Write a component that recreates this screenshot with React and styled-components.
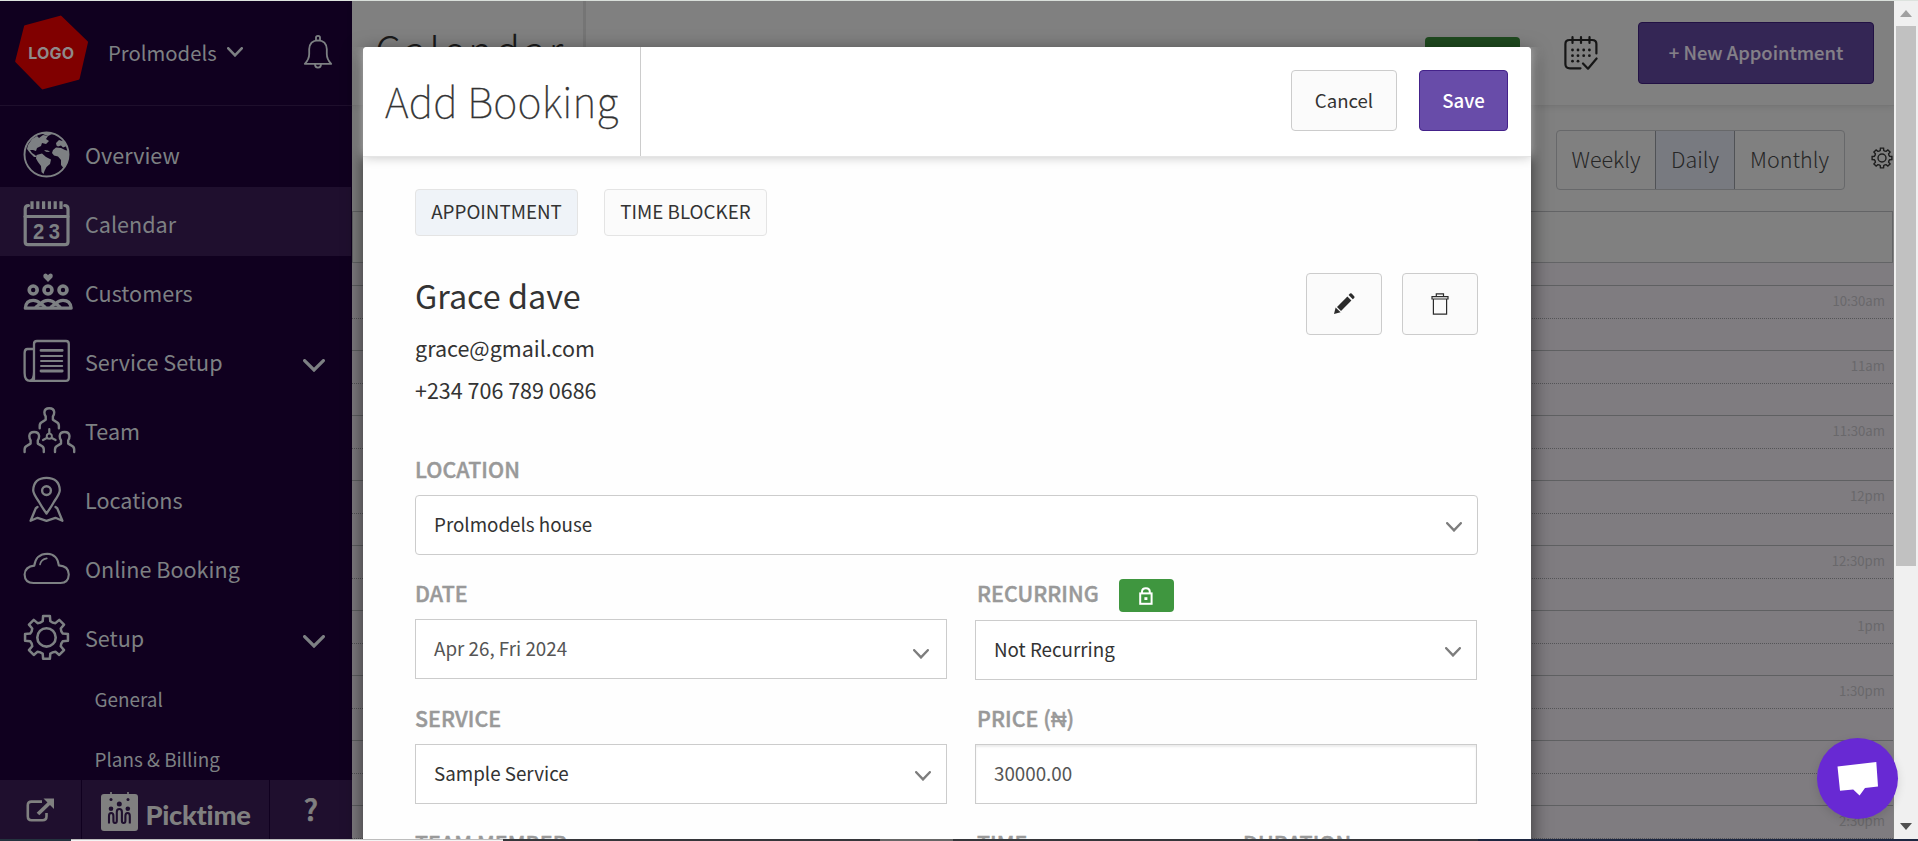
import React from 'react';
import styled, { createGlobalStyle, css } from 'styled-components';

const sans = '"Source Sans Pro", "Noto Sans CJK SC", "Open Sans", sans-serif';

const GlobalStyle = createGlobalStyle`
  * { box-sizing: border-box; }
  body { margin: 0; overflow: hidden; background: #808080; font-family: ${sans}; color: #333; }
`;

const Screen = styled.div`
  position: relative;
  width: 1918px;
  height: 841px;
  display: flex;
  flex-direction: column;
  overflow: hidden;
  white-space: nowrap;
`;
const TopEdge = styled.div`height: 1px; flex: none; background: #dde3de;`;
const Main = styled.div`flex: 1; min-height: 0; display: flex;`;
const BottomEdge = styled.div`
  height: 2px; flex: none; position: relative; z-index: 5; display: flex;
`;
const EdgePart = styled.div`
  flex: ${p => (p.$w ? `0 0 ${p.$w}px` : 1)};
  background: ${p => p.$c};
`;

/* ---------- sidebar ---------- */
const Sidebar = styled.aside`
  width: 352px; flex: none; background: #10001f; color: #7d8083;
  display: flex; flex-direction: column;
`;
const Brand = styled.div`
  height: 105px; flex: none; display: flex; align-items: center; border-bottom: 1px solid #1e0f2c;
  padding: 0 19px 2px 15px;
`;
const BrandName = styled.div`
  margin-left: 19px; font-size: 20.3px; line-height: 30px; flex: 1; display: flex; align-items: center; gap: 10px;
`;
const Nav = styled.nav`flex: 1; min-height: 0; overflow: hidden; padding-top: 12px;`;
const NavItem = styled.div`
  height: 69px; width: 351px; display: flex; align-items: center; padding: 1px 26px 0 22px;
  background: ${p => (p.$active ? '#1f0f2e' : 'transparent')};
`;
const NavLabel = styled.span`
  flex: 1; margin-left: 7px; padding-top: 4px; font-size: 21.6px; line-height: 32px;
`;
const SubItem = styled.div`
  height: 60px; padding-left: 94.5px; line-height: 57px; font-size: 18.9px;
`;
const SideFooter = styled.div`height: 59px; flex: none; display: flex; background: #1f0f2e;`;
const FooterCell = styled.div`
  flex: ${p => (p.$w ? `0 0 ${p.$w}px` : 1)};
  display: flex; align-items: center; justify-content: center; color: #808080;
  padding-top: ${p => p.$pt || 0}px;
  ${p => p.$line && css`border-right: 1px solid #10001f;`}
`;
const Picktime = styled.span`
  margin-left: 8px; padding-top: 8px; font-family: Lato, sans-serif; font-weight: 900; font-size: 27.3px; line-height: 30px; letter-spacing: -0.3px;
`;
const Help = styled.span`font-size: 29px; font-weight: 500; -webkit-text-stroke: 0.7px #808080; line-height: 40px; padding-bottom: 4px;`;

/* ---------- calendar page ---------- */
const Page = styled.section`
  flex: 1; min-width: 0; background: #808080; display: flex; flex-direction: column;
`;
const PageHeader = styled.header`
  height: 105px; flex: none; display: flex; align-items: center; padding-right: 20px;
  border-bottom: 1px solid #767676; box-shadow: 0 2px 6px rgba(0,0,0,.08);
`;
const PageTitle = styled.div`
  width: 234px; height: 104px; padding-left: 23px; border-right: 3px solid #757575; color: #1a1a1a;
  font-size: 41px; font-weight: 300; line-height: 96px; letter-spacing: 3px;
`;
const Grow = styled.div`flex: 1;`;
const GreenTag = styled.div`width: 95px; height: 30px; border-radius: 4px; background: #1f4a1f; align-self: flex-start; margin-top: 36px;`;
const NewButton = styled.div`
  width: 236px; height: 62px; border: 1px solid #221144; border-radius: 4px; background: #342655; color: #848088;
  text-align: center; font-size: 18.4px; font-weight: 500; -webkit-text-stroke: 0.2px #848088; line-height: 58px;
`;
const IconSlot = styled.div`margin: 0 40px 0 44px; display: flex;`;
const ViewBar = styled.div`
  height: 105px; flex: none; display: flex; justify-content: flex-end; align-items: center; padding-top: 2px;
`;
const Segments = styled.div`display: flex; height: 60px; border: 1px solid #67686a; border-radius: 4px;`;
const Segment = styled.div`
  width: ${p => p.$w}px; text-align: center; line-height: 55px; font-size: 21.5px; font-weight: 300; color: #262626;
  background: ${p => (p.$active ? '#787a80' : 'transparent')};
  ${p => p.$active && css`border-left: 1px solid #505256; border-right: 1px solid #505256;`}
`;
const GearSlot = styled.div`margin: 0 1px 0 26px; display: flex; padding-bottom: 3px;`;
const DayHead = styled.div`height: 52px; flex: none; border: 1px solid #636466; margin-right: 1px;`;
const Gap = styled.div`height: 22px; flex: none; background: #7f7c80;`;
const Slot = styled.div`
  height: 65px; flex: none; background: #7f7c80; border-top: 1px solid #5f6062; margin-right: 1px;
`;
const SlotHalf = styled.div`
  height: 33px; border-bottom: 1px dotted #545457; text-align: right; padding-right: 8px; color: #69686b;
  font-size: 13.2px; font-weight: 400; line-height: 29px;
`;

/* ---------- window scrollbar ---------- */
const ScrollTrack = styled.div`
  width: 24px; flex: none; background: #f0f0f0; display: flex; flex-direction: column; align-items: center;
`;
const ScrollArrow = styled.div`height: 25px; width: 24px; display: flex; align-items: center; justify-content: center;`;
const Thumb = styled.div`width: 20px; height: 540px; background: #c1c1c1;`;

/* ---------- dialog ---------- */
const Dialog = styled.div`
  position: absolute; left: 363px; top: 47px; width: 1168px; height: 800px; background: #fefefe;
  border-radius: 4px 4px 0 0; box-shadow: 0 6px 20px rgba(0,0,0,.6);
`;
const DialogHeader = styled.div`
  height: 110px; display: flex; align-items: center; background: #fff; border-bottom: 1px solid #e5e5e5;
  border-radius: 4px 4px 0 0; box-shadow: 0 0 12px #c4c4c4; clip-path: inset(0 -12px -14px -12px);
  padding-right: 23px;
`;
const DialogTitle = styled.div`
  width: 278px; height: 109px; border-right: 1px solid #ccc; padding-left: 22px; font-size: 41px; font-weight: 100;
  line-height: 106px; color: #333; letter-spacing: 0.2px; -webkit-text-stroke: 0.3px #333;
`;
const Button = styled.div`
  width: ${p => p.$w}px; height: 61px; border-radius: 4px; text-align: center; line-height: 58px; font-size: 18.6px;
  margin-left: ${p => p.$ml || 0}px; margin-bottom: 3px;
  border: 1px solid ${p => (p.$primary ? '#44228a' : '#ccc')};
  background: ${p => (p.$primary ? '#684ca9' : '#fbfbfb')};
  color: ${p => (p.$primary ? '#fff' : '#333')};
  font-weight: ${p => (p.$primary ? 500 : 400)};
`;
const DialogBody = styled.div`padding: 32px 53px 0 52px;`;
const Tabs = styled.div`display: flex; gap: 26px;`;
const Tab = styled.div`
  width: 163px; height: 47px; border: 1px solid #e4e4e4; border-radius: 4px; text-align: center; line-height: 42px;
  font-size: 18.8px; background: ${p => (p.$active ? '#eff3f8' : '#fbfbfb')};
`;
const Contact = styled.div`display: flex; justify-content: space-between; margin-top: 37px;`;
const ContactName = styled.div`font-size: 32.3px; line-height: 44px; margin-bottom: 10px;`;
const ContactLine = styled.div`font-size: 21.5px; line-height: 42px;`;
const IconButtons = styled.div`display: flex; gap: 20px;`;
const IconButton = styled.div`
  width: 76px; height: 62px; border: 1px solid #ccc; border-radius: 4px; background: #fbfbfb;
  display: flex; align-items: center; justify-content: center;
`;
const Field = styled.div`margin-top: ${p => p.$mt}px;`;
const Label = styled.div`
  height: 30px; margin-bottom: ${p => p.$mb || 11}px; padding-left: ${p => p.$pl || 0}px; display: flex; align-items: center;
  font-size: 21.4px; line-height: 30px; font-weight: 500; -webkit-text-stroke: 0.45px #999; color: #999; letter-spacing: 0.05px;
`;
const Control = styled.div`
  height: 60px; border: 1px solid #ccc; border-radius: ${p => (p.$round ? 4 : 0)}px; background: #fff;
  display: flex; justify-content: space-between; align-items: center; padding: 0 ${p => p.$pr || 15}px 0 18px;
  font-size: 18.8px; line-height: 30px; color: ${p => (p.$muted ? '#555' : '#333')};
  ${p => p.$inset && css`box-shadow: inset 0 2px 2px rgba(0,0,0,.08);`}
`;
const ControlText = styled.span`padding-bottom: 2px;`;
const ChevronSlot = styled.span`display: flex; padding-top: ${p => p.$pt || 4}px;`;
const FormGrid = styled.div`display: grid; grid-template-columns: 532px 502px; column-gap: 28px;`;
const LockBadge = styled.span`
  width: 55px; height: 33px; border-radius: 4px; background: #3f963f; margin: 5px 0 0 20px;
  display: flex; align-items: center; justify-content: center;
`;
const TimeLabels = styled.div`display: grid; grid-template-columns: 266px 1fr;`;

const ChatButton = styled.div`
  position: absolute; left: 1817px; top: 738px; width: 81px; height: 81px; border-radius: 50%; background: #6829d3;
  box-shadow: 0 3px 10px rgba(0,0,0,.12); display: flex; align-items: center; justify-content: center;
`;

const Chevron = ({ w = 16, h = 10, color = '#7d7d7d', sw = 2.4 }) => (
  <svg width={w} height={h} viewBox={`0 0 ${w} ${h}`} fill="none" stroke={color} strokeWidth={sw} strokeLinecap="round">
    <path d={`M${sw / 2} ${sw / 2} L${w / 2} ${h - sw / 2 - 0.4} L${w - sw / 2} ${sw / 2}`} />
  </svg>
);

function gearPath(cx, cy, rOut, rIn) {
  const pt = (r, deg) => {
    const a = (deg * Math.PI) / 180;
    return `${(cx + r * Math.cos(a)).toFixed(2)} ${(cy + r * Math.sin(a)).toFixed(2)}`;
  };
  let d = '';
  for (let i = 0; i < 8; i++) {
    const c = i * 45;
    d += `${i ? 'L' : 'M'}${pt(rIn, c - 13)} L${pt(rOut, c - 9)} L${pt(rOut, c + 9)} L${pt(rIn, c + 13)} `;
    d += `Q${pt(rIn - rOut * 0.06, c + 22.5)} ${pt(rIn, c + 32)} `;
  }
  return d + 'Z';
}

/* Each navigation drawing uses a 56x50 box whose origin sits at (22, y). */
const NavIcon = ({ y, children }) => (
  <svg width="56" height="50" viewBox={`22 ${y} 56 50`} fill="none" stroke="#7d8083" strokeWidth="2.3" strokeLinejoin="round" strokeLinecap="round">
    {children}
  </svg>
);

const Globe = () => (
  <NavIcon y={128}>
    <circle cx="46.5" cy="154.5" r="22" strokeWidth="1.9" />
    <g fill="#7d8083" stroke="none">
      <path d="M28 145 L32 139 L37 136 L39 138 L43 135 L48 136 L46 139 L49 141 L46 144 L42 143 L41 146 L37 148 L36 151 L33 150 L30 150 L32 153 L35 155 L37 157 L34 157 L30 153 L27 149 Z" />
      <path d="M41 133 L49 132.6 L52 134 L48 136 L44 134.5 Z" />
      <path d="M36.5 155 L42 153.6 L46 157 L51 159.5 L50 164 L46.5 167 L44.5 171 L43.5 174 L41.5 172 L41 166 L38 162 L36 158.5 Z" />
      <path d="M53 150 L56 147.5 L61 148 L65 150 L68.5 151 L68.5 158 L66 165 L63.5 168 L61 165 L61 160 L58 156.5 L54 155.5 L52 153 Z" />
      <path d="M56 143 L59 140 L64 141.5 L67 146 L63 147.5 L61 145.5 L58 146.5 L56.5 145.5 Z" />
      <path d="M44 150 L48 150.5 L50 152 L46 151.7 Z" />
    </g>
  </NavIcon>
);
const CalendarIcon = () => (
  <NavIcon y={197}>
    <path d="M28.5 205.5 Q25.2 205.5 25.2 209 V242 Q25.2 244.6 28 244.6 H65 Q68 244.6 68 242 V209 Q68 205.5 64.7 205.5" strokeWidth="3.2" />
    <path d="M25 216.5 H68" strokeWidth="3" />
    <path d="M32 201.3 V209 M37.8 201.3 V209 M43.6 201.3 V209 M49.4 201.3 V209 M55.2 201.3 V209 M61 201.3 V209" strokeWidth="3.2" strokeLinecap="butt" />
    <text x="33" y="239" fill="#7d8083" stroke="none" fontFamily="Liberation Sans, sans-serif" fontWeight="700" fontSize="22" transform="translate(33 0) scale(.92 1) translate(-33 0)" letterSpacing="5">23</text>
  </NavIcon>
);
const CustomersIcon = () => (
  <NavIcon y={266}>
    <path d="M48 282 L43.6 277.5 Q42.6 274 45.4 273.6 Q47.3 273.6 48 275.3 Q48.8 273.6 50.8 273.6 Q53.6 274.2 52.4 277.5 Z" fill="#7d8083" stroke="none" />
    {[33.2, 48, 63].map(x => <circle key={x} cx={x} cy="290" r="4" strokeWidth="3.6" />)}
    <path d="M25.3 308.2 Q26 300.4 33.2 300.4 Q37.6 300.4 40.6 304 Q43.6 300.4 48 300.4 Q52.6 300.4 55.6 304 Q58.6 300.4 63 300.4 Q70.4 300.4 71.2 308.2 Z" strokeWidth="3.2" />
    <path d="M36 307 L40.6 303.5 L45 307 M51 307 L55.6 303.5 L60 307" strokeWidth="3" />
  </NavIcon>
);
const ServiceIcon = () => (
  <NavIcon y={335}>
    <path d="M34 379 V344 Q34 341 37 341 H66 Q68.8 341 68.8 344 V378 Q68.8 380.9 66 380.9 H30 Q24.6 380.9 24.6 373 V353 Q24.6 349 27.5 349 H34 M34 372 Q34 380.6 29.5 380.8" />
    <path d="M41 350.4 H62.2 M41 371 H62.2" strokeWidth="2.8" />
    <path d="M41 356 H62.2 M41 361 H62.2 M41 366 H62.2" strokeWidth="2" />
  </NavIcon>
);
const Person = ({ x, y }) => (
  <path
    transform={`translate(${x} ${y})`}
    d="M-9.6 20 V17.5 Q-9.6 14.6 -6.6 13.4 L-3.6 11.6 V8.2 Q-4.9 6.8 -4.9 4 Q-4.6 0 0 0 Q4.6 0 4.9 4 Q4.9 6.8 3.6 8.2 V11.6 L6.6 13.4 Q9.6 14.6 9.6 17.5 V20"
    strokeWidth="2.4"
  />
);
const TeamIcon = () => (
  <NavIcon y={404}>
    <Person x={49.3} y={408.2} />
    <Person x={34.2} y={432} />
    <Person x={64.6} y={432} />
    <circle cx="49.3" cy="436.2" r="2.6" strokeWidth="1.9" />
    <path d="M49.3 429 V433 M46.8 438 L43 440 M51.8 438 L55.6 440" strokeWidth="2.2" />
  </NavIcon>
);
const LocationIcon = () => (
  <NavIcon y={473}>
    <path d="M46.5 513.5 Q42.5 508 38.8 501.5 Q33.2 493.5 33.2 490.2 Q33.8 478 46.5 477.9 Q59.3 478 59.8 490.2 Q59.8 493.5 54.2 501.5 Q50.5 508 46.5 513.5 Z" />
    <circle cx="46.5" cy="490.6" r="4.4" strokeWidth="2.4" />
    <path d="M37.5 507 L35.8 508.2 L30.6 520.8 L37.6 517.8 L46.5 520.8 L55.4 517.8 L62.4 520.8 L57.2 508.2 L55.5 507" />
  </NavIcon>
);
const CloudIcon = () => (
  <NavIcon y={542}>
    <path d="M33.5 583 Q24.8 583 24.6 574.5 Q25 566.5 34.3 565.6 Q36 554 47.3 553.8 Q57.5 554.4 58.8 565.4 Q68.6 566 68.8 574.5 Q68.4 583 60.5 583 Z" strokeWidth="2.1" />
    <path d="M40 564.5 Q41 559.5 46.8 558.4" strokeWidth="1.6" />
  </NavIcon>
);
const SetupIcon = () => (
  <NavIcon y={611}>
    <path d={gearPath(46.5, 637.4, 21.7, 16.8)} strokeWidth="2.5" />
    <circle cx="46.5" cy="637.4" r="9.2" strokeWidth="2.6" />
  </NavIcon>
);

const Logo = () => (
  <svg width="74" height="76" viewBox="15 14 74 76">
    <path d="M60.5 17 L86.6 42.3 L78.3 78.3 L42.8 88 L16.6 61.3 L25.4 26.7 Z" fill="#800000" stroke="#800000" strokeWidth="2.8" strokeLinejoin="round" />
    <text x="51.2" y="58.7" textAnchor="middle" fill="#8f8a8a" fontFamily="Inter, sans-serif" fontWeight="700" fontSize="16" textLength="46">LOGO</text>
  </svg>
);
const Bell = () => (
  <svg width="30" height="36" viewBox="303 32 30 36" fill="none" stroke="#7d8083" strokeWidth="1.8" strokeLinejoin="round">
    <path d="M316 38.5 V35.5 Q316 33.8 318 33.8 Q320 33.8 320 35.5 V38.5" />
    <path d="M304.8 61.8 Q309.2 57.4 309.2 52 V47 Q309.6 38.8 318 38.4 Q326.4 38.8 326.8 47 V52 Q326.8 57.4 331.2 61.8 Z" />
    <path d="M315 62 Q315 65.6 318 65.6 Q321 65.6 321 62" />
  </svg>
);
const CalendarCheck = () => (
  <svg width="34" height="35" viewBox="0 0 34 35" fill="none" stroke="#161616" strokeWidth="2.2" strokeLinecap="round" strokeLinejoin="round">
    <path d="M16.5 32.3 H6 Q1.4 32.3 1.4 28 V8 Q1.4 4 5.5 4 H28 Q32.4 4 32.4 8 V17.5" />
    <path d="M8.5 1.2 V7 M17 1.2 V7 M25.5 1.2 V7" />
    <path d="M19 27.5 L24 32.7 L32.6 22.5" />
    <g fill="#161616" stroke="none">
      {[14, 19.7, 25.2].map((y, r) => [8.5, 14, 19.7, 25.4].slice(0, r === 2 ? 2 : 4).map(x => <circle key={`${x}-${y}`} cx={x} cy={y} r="1.4" />))}
    </g>
  </svg>
);
const External = () => (
  <svg width="29" height="25" viewBox="0 0 29 25" fill="none" stroke="#808080" strokeWidth="3">
    <path d="M16 3.6 H5.5 Q1.8 3.6 1.8 7.3 V18.3 Q1.8 22.3 5.5 22.3 H16.5 Q20.5 22.3 20.5 18.3 V15" strokeWidth="2.6" />
    <path d="M12 16 L24 4.5" strokeWidth="3.8" />
    <path d="M17.5 0.5 H28 V11 Z" fill="#808080" stroke="none" />
  </svg>
);
const PicktimeMark = () => (
  <svg width="37" height="39" viewBox="0 0 37 39">
    <rect x="0" y="2" width="37" height="37" rx="3" fill="#808080" />
    <g stroke="#808080" strokeWidth="1.6"><path d="M10 0 V3 M27 0 V3" /></g>
    <g fill="#1f0f2e">
      <circle cx="10" cy="7.4" r="1.5" /><circle cx="27" cy="7.4" r="1.5" />
      <circle cx="18.3" cy="12" r="2.5" /><circle cx="10" cy="16.8" r="2.3" /><circle cx="26.8" cy="16.8" r="2.3" />
    </g>
    <path d="M8 31.5 V24 Q8 21 10.2 21 Q12.4 21 12.4 24 V29 Q12.4 31 14 31 Q15.8 31 15.8 29 V20 Q15.8 17 18.3 17 Q20.9 17 20.9 20 V29 Q20.9 31 22.6 31 Q24.4 31 24.4 29 V24 Q24.4 21 26.6 21 Q28.8 21 28.8 24 V31.5" fill="none" stroke="#1f0f2e" strokeWidth="2.1" />
  </svg>
);
const Pencil = () => (
  <svg width="22" height="22" viewBox="0 0 22 22" fill="#2b2b2b">
    <path d="M15.6 2 L17 0.6 Q17.8 0 18.6 0.6 L21.2 3.2 Q22 4 21.2 4.9 L19.8 6.3 Z" />
    <path d="M14.4 3.4 L18.4 7.4 L8 17.9 L4 13.9 Z" />
    <path d="M2.6 14.4 L1 21 L7.6 19.2 Z" />
  </svg>
);
const Trash = () => (
  <svg width="18" height="22" viewBox="0 0 18 22" fill="none" stroke="#2b2b2b" strokeWidth="1.2">
    <path d="M5.3 3.4 V0.8 H12.5 V3.4 M1 3.7 H17 V6 H1 Z M2.4 6.2 V21.2 H15.6 V6.2" />
  </svg>
);
const Lock = () => (
  <svg width="14" height="18" viewBox="0 0 14 18" fill="none" stroke="#fff" strokeWidth="2">
    <rect x="1.2" y="6.4" width="11.4" height="10.4" />
    <path d="M3 6.4 V4.8 Q3 1.2 6.9 1.2 Q10.8 1.2 10.8 4.8 V6.4" />
    <rect x="5.4" y="10.2" width="3" height="2.8" fill="#fff" stroke="none" />
  </svg>
);

const navItems = [
  { label: 'Overview', icon: <Globe /> },
  { label: 'Calendar', icon: <CalendarIcon />, active: true },
  { label: 'Customers', icon: <CustomersIcon /> },
  { label: 'Service Setup', icon: <ServiceIcon />, open: true },
  { label: 'Team', icon: <TeamIcon /> },
  { label: 'Locations', icon: <LocationIcon /> },
  { label: 'Online Booking', icon: <CloudIcon /> },
  { label: 'Setup', icon: <SetupIcon />, open: true },
];
const slots = ['10:30am', '11am', '11:30am', '12pm', '12:30pm', '1pm', '1:30pm', '', '2:30pm'];

export default function App() {
  return (
    <Screen>
      <GlobalStyle />
      <TopEdge />
      <Main>
        <Sidebar>
          <Brand>
            <Logo />
            <BrandName>Prolmodels <Chevron w={16} h={10} color="#7d8083" sw={2.6} /></BrandName>
            <Bell />
          </Brand>
          <Nav>
            {navItems.map(item => (
              <NavItem key={item.label} $active={item.active}>
                {item.icon}
                <NavLabel>{item.label}</NavLabel>
                {item.open && <ChevronSlot $pt={11}><Chevron w={22} h={13} color="#7d8083" sw={3.2} /></ChevronSlot>}
              </NavItem>
            ))}
            <SubItem>General</SubItem>
            <SubItem>Plans &amp; Billing</SubItem>
          </Nav>
          <SideFooter>
            <FooterCell $w={82} $line $pt={2}><External /></FooterCell>
            <FooterCell $w={188} $line $pt={3}><PicktimeMark /><Picktime>Picktime</Picktime></FooterCell>
            <FooterCell><Help>?</Help></FooterCell>
          </SideFooter>
        </Sidebar>
        <Page>
          <PageHeader>
            <PageTitle>Calendar</PageTitle>
            <Grow />
            <GreenTag />
            <IconSlot><CalendarCheck /></IconSlot>
            <NewButton>+ New Appointment</NewButton>
          </PageHeader>
          <ViewBar>
            <Segments>
              <Segment $w={98}>Weekly</Segment>
              <Segment $w={80} $active>Daily</Segment>
              <Segment $w={109}>Monthly</Segment>
            </Segments>
            <GearSlot>
              <svg width="22" height="22" viewBox="0 0 22 22" fill="none" stroke="#1d1d1d" strokeWidth="1.4">
                <path d={gearPath(11, 11, 10, 7.8)} />
                <circle cx="11" cy="11" r="4" />
              </svg>
            </GearSlot>
          </ViewBar>
          <DayHead />
          <Gap />
          {slots.map((t, i) => (
            <Slot key={i}><SlotHalf>{t}</SlotHalf></Slot>
          ))}
        </Page>
        <ScrollTrack>
          <ScrollArrow>
            <svg width="12" height="7" viewBox="0 0 12 7"><path d="M0 7 L6 0 L12 7 Z" fill="#a0a0a0" /></svg>
          </ScrollArrow>
          <Thumb />
          <Grow />
          <ScrollArrow>
            <svg width="12" height="7" viewBox="0 0 12 7"><path d="M0 0 L6 7 L12 0 Z" fill="#505050" /></svg>
          </ScrollArrow>
        </ScrollTrack>
      </Main>
      <BottomEdge>
        <EdgePart $w={71} $c="#24333f" />
        <EdgePart $w={432} $c="linear-gradient(#bdbdbd 50%, #f4f4f4 50%)" />
        <EdgePart $w={377} $c="#35363a" />
        <EdgePart $w={73} $c="#666" />
        <EdgePart $w={525} $c="#35363a" />
        <EdgePart $c="#1d2741" />
      </BottomEdge>

      <Dialog>
        <DialogHeader>
          <DialogTitle>Add Booking</DialogTitle>
          <Grow />
          <Button $w={106}>Cancel</Button>
          <Button $w={89} $ml={22} $primary>Save</Button>
        </DialogHeader>
        <DialogBody>
          <Tabs>
            <Tab $active>APPOINTMENT</Tab>
            <Tab>TIME BLOCKER</Tab>
          </Tabs>
          <Contact>
            <div>
              <ContactName>Grace dave</ContactName>
              <ContactLine>grace@gmail.com</ContactLine>
              <ContactLine>+234 706 789 0686</ContactLine>
            </div>
            <IconButtons>
              <IconButton><Pencil /></IconButton>
              <IconButton><Trash /></IconButton>
            </IconButtons>
          </Contact>
          <Field $mt={43}>
            <Label>LOCATION</Label>
            <Control $round>
              <ControlText>Prolmodels house</ControlText>
              <ChevronSlot><Chevron /></ChevronSlot>
            </Control>
          </Field>
          <FormGrid>
            <Field $mt={23}>
              <Label>DATE</Label>
              <Control $muted $pr={17}>
                <ControlText>Apr 26, Fri 2024</ControlText>
                <ChevronSlot $pt={9}><Chevron /></ChevronSlot>
              </Control>
            </Field>
            <Field $mt={23}>
              <Label $pl={2} $mb={12}>RECURRING<LockBadge><Lock /></LockBadge></Label>
              <Control>
                <ControlText>Not Recurring</ControlText>
                <ChevronSlot><Chevron /></ChevronSlot>
              </Control>
            </Field>
            <Field $mt={23}>
              <Label>SERVICE</Label>
              <Control $pr={15}>
                <ControlText>Sample Service</ControlText>
                <ChevronSlot><Chevron /></ChevronSlot>
              </Control>
            </Field>
            <Field $mt={23}>
              <Label $pl={2}>PRICE (₦)</Label>
              <Control $muted $inset><ControlText>30000.00</ControlText></Control>
            </Field>
            <Field $mt={24}><Label>TEAM MEMBER</Label></Field>
            <Field $mt={24}>
              <TimeLabels><Label $pl={2}>TIME</Label><Label $pl={2}>DURATION</Label></TimeLabels>
            </Field>
          </FormGrid>
        </DialogBody>
      </Dialog>

      <ChatButton>
        <svg width="42" height="36" viewBox="0 0 42 36"><path d="M0.5 5.5 L39.3 1 L41 25.5 L28 27 L22.6 34.6 L16.2 28.4 L3 29.8 Z" fill="#fff" /></svg>
      </ChatButton>
    </Screen>
  );
}
